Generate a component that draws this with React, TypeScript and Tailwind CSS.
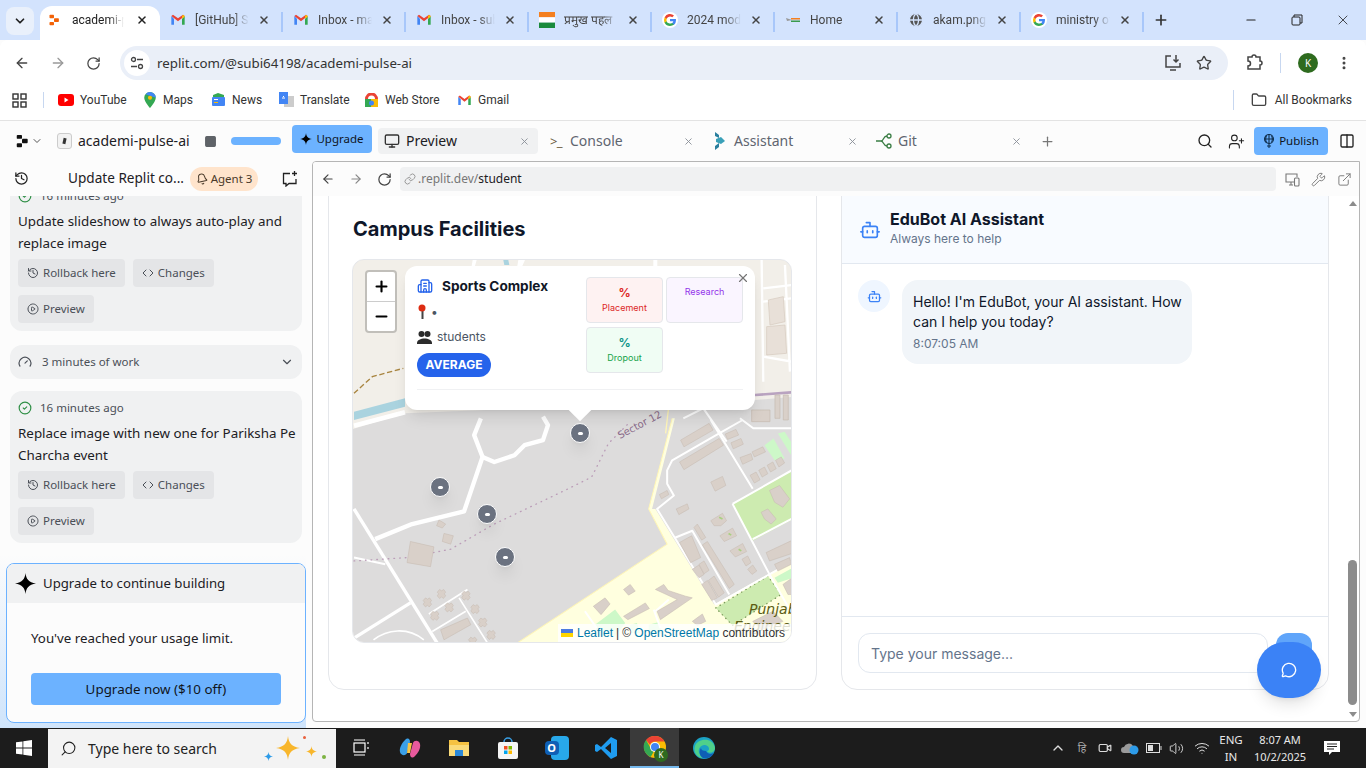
import React from 'react';
import {
  ArrowLeft, ArrowRight, RotateCw, Star, MoreVertical, X, Plus, Minus, ChevronDown, Search, UserPlus,
  Columns2, History, Link, Wrench, ExternalLink, Bot, Building2, Monitor, Gauge,
  CircleCheck, CirclePlay, Code, MessageCircle, Folder, ChevronUp, Wifi, Volume2, Globe, Bell, Square, Video,
} from 'lucide-react';

const GmailIcon = ({ size = 16 }: { size?: number }) => (
  <svg width={size} height={size} viewBox="0 0 24 24" className="shrink-0">
    <path d="M2 6v13h4V10z" fill="#4285f4" />
    <path d="M22 6v13h-4V10z" fill="#34a853" />
    <path d="M2 6l10 8 10-8-2.500-2L12 9.500 4.500 4z" fill="#ea4335" />
    <path d="M18 6.500V10l4-3V6l-2.500-2z" fill="#fbbc04" />
  </svg>
);

const GoogleIcon = () => (
  <svg width="16" height="16" viewBox="0 0 24 24" className="shrink-0">
    <circle cx="12" cy="12" r="12" fill="#fff" />
    <path d="M21 12.300c0-.7 0-1.300-.2-1.900H12v3.600h5a4.300 4.300 0 0 1-1.900 2.800v2.300h3A9 9 0 0 0 21 12.300z" fill="#4285f4" />
    <path d="M12 21c2.400 0 4.500-.8 6-2.200l-3-2.300a5.400 5.400 0 0 1-8-2.800H4v2.400A9 9 0 0 0 12 21z" fill="#34a853" />
    <path d="M7 13.700a5.300 5.300 0 0 1 0-3.400V7.900H4a9 9 0 0 0 0 8.200z" fill="#fbbc04" />
    <path d="M12 6.600c1.300 0 2.500.5 3.400 1.300L18 5.300A9 9 0 0 0 4 7.900l3 2.400a5.400 5.400 0 0 1 5-3.700z" fill="#ea4335" />
  </svg>
);

const ReplitLogo = ({ color = '#f26207', size = 16 }: { color?: string; size?: number }) => (
  <svg width={size} height={size} viewBox="0 0 16 16" className="shrink-0">
    <rect x="2" y="1" width="6" height="4.500" rx="1" fill={color} />
    <rect x="8" y="5.500" width="6.500" height="5" rx="1" fill={color} />
    <rect x="2" y="10.500" width="6" height="4.500" rx="1" fill={color} />
  </svg>
);

const FlagIcon = () => (
  <svg width="16" height="16" viewBox="0 0 16 16" className="shrink-0">
    <rect y="0" width="16" height="5.300" fill="#f47f1f" />
    <rect y="5.300" width="16" height="5.300" fill="#fff" />
    <rect y="10.600" width="16" height="5.400" fill="#1a8a3c" />
  </svg>
);

const HomeFavicon = () => (
  <svg width="16" height="16" viewBox="0 0 16 16" className="shrink-0">
    <path d="M1 6l6 2-5 1z" fill="#999" />
    <rect x="6" y="6" width="9" height="1.500" fill="#f47f1f" />
    <rect x="6" y="8.500" width="9" height="1.500" fill="#3a9a4c" />
  </svg>
);

const ChromeIcon = ({ size = 24 }: { size?: number }) => (
  <svg width={size} height={size} viewBox="0 0 24 24">
    <circle cx="12" cy="12" r="11" fill="#fbbc04" />
    <path d="M12 1a11 11 0 0 1 9.500 5.500H12a5.500 5.500 0 0 0-5 3.300L3 5A11 11 0 0 1 12 1z" fill="#ea4335" />
    <path d="M3 5l4.500 8a5.500 5.500 0 0 0 3 4l-2.800 5A11 11 0 0 1 3 5z" fill="#34a853" />
    <circle cx="12" cy="12" r="5" fill="#fff" />
    <circle cx="12" cy="12" r="4" fill="#4285f4" />
  </svg>
);

const Sparkle = ({ size = 14, color = '#000' }: { size?: number; color?: string }) => (
  <svg width={size} height={size} viewBox="0 0 24 24" className="shrink-0">
    <path d="M12 0c.8 7 3.500 10.700 12 12-8.500 1.300-11.200 5-12 12-.8-7-3.500-10.700-12-12C8.500 10.700 11.200 7 12 0z" fill={color} />
  </svg>
);

const tabs: { title: string; icon: React.ReactNode }[] = [
  { title: '[GitHub] Sub', icon: <GmailIcon /> },
  { title: 'Inbox - mail', icon: <GmailIcon /> },
  { title: 'Inbox - subi', icon: <GmailIcon /> },
  { title: 'प्रमुख पहल', icon: <FlagIcon /> },
  { title: '2024 mode', icon: <GoogleIcon /> },
  { title: 'Home', icon: <HomeFavicon /> },
  { title: 'akam.png', icon: <Globe size={16} className="text-[#555] shrink-0" fill="#555" stroke="#d3e3fd" /> },
  { title: 'ministry of', icon: <GoogleIcon /> },
];

const TabStrip = () => (
  <div className="h-10 bg-[#d3e3fd] flex items-end pl-[6px] text-[12px] text-[#444] font-['Roboto',sans-serif]">
    <div className="w-7 h-7 mb-[5px] mr-[6px] rounded-lg bg-[#e9f0fb] flex items-center justify-center">
      <ChevronDown size={14} strokeWidth={3} className="text-[#222]" />
    </div>
    <div className="w-[120px] h-[34px] pb-[6px] bg-white rounded-t-xl flex items-center pl-[8px] pr-[12px] gap-[12px] text-[#222]">
      <ReplitLogo size={12} />
      <span className="flex-1 overflow-hidden whitespace-nowrap [mask-image:linear-gradient(90deg,#000_70%,transparent)]">academi-pulse</span>
      <X size={12} strokeWidth={3} className="shrink-0" />
    </div>
    {tabs.map((t) => (
      <div key={t.title} className="w-[123px] h-[34px] pb-[6px] flex items-center pl-[10px] pr-[13px] gap-[9px] relative">
        <span className="shrink-0">{t.icon}</span>
        <span className="flex-1 overflow-hidden whitespace-nowrap [mask-image:linear-gradient(90deg,#000_70%,transparent)]">{t.title}</span>
        <X size={12} strokeWidth={3} className="shrink-0 text-[#444]" />
        <span className="absolute right-0 top-[6px] h-5 w-[2px] bg-[#a8c7fa]" />
      </div>
    ))}
    <Plus size={16} strokeWidth={2.5} className="mb-[12px] ml-[9px] text-[#333]" />
    <div className="flex-1" />
    <div className="flex items-center h-10 text-[#222]">
      <div className="w-[46px] flex justify-center"><Minus size={14} /></div>
      <div className="w-[46px] flex justify-center">
        <svg width="12" height="12" viewBox="0 0 12 12" fill="none" stroke="#222"><rect x="1" y="3" width="8" height="8" rx="1" /><path d="M3 3V1h8v8H9" /></svg>
      </div>
      <div className="w-[46px] flex justify-center"><X size={16} strokeWidth={1.2} /></div>
    </div>
  </div>
);

const AddressBar = () => (
  <div className="h-[46px] bg-white rounded-t-lg flex items-center text-[#444]">
    <div className="w-[120px] shrink-0 flex items-center pl-[14px] gap-[20px]">
      <ArrowLeft size={16} strokeWidth={2} />
      <ArrowRight size={16} strokeWidth={2} className="text-[#999]" />
      <RotateCw size={15} strokeWidth={2} />
    </div>
    <div className="w-[1108px] h-[34px] rounded-full bg-[#eaeff8] flex items-center pl-[4px] pr-[16px]">
      <div className="w-[26px] h-[26px] rounded-full bg-white flex items-center justify-center mr-[7px]">
        <svg width="14" height="14" viewBox="0 0 14 14" fill="none" stroke="#444" strokeWidth="1.300">
          <circle cx="3.500" cy="3.500" r="2" /><path d="M7 3.500h6M1 10.500h6" /><circle cx="10.500" cy="10.500" r="2" />
        </svg>
      </div>
      <span className="text-[13.3px] text-[#333] pt-px">replit.com/@subi64198/academi-pulse-ai</span>
      <div className="flex-1" />
      <svg width="18" height="18" viewBox="0 0 18 18" fill="none" stroke="#444" strokeWidth="1.500" className="mr-[14px]">
        <path d="M7 2H2v11h14V9" /><path d="M12 1v7M9.500 5.500L12 8l2.500-2.500" /><path d="M6 16h6" />
      </svg>
      <Star size={16} strokeWidth={2} />
    </div>
    <div className="flex-1 flex items-center pl-[17px] text-[#444]">
      <svg width="18" height="18" viewBox="0 0 18 18" fill="none" stroke="#444" strokeWidth="1.500">
        <path d="M3 3h4a2 2 0 0 1 4 0h4v4a2 2 0 0 1 0 4v4H3v-3a2 2 0 0 0 0-5z" />
      </svg>
      <span className="w-px h-5 bg-[#c7d7f0] ml-[17px]" />
      <span className="w-5 h-5 rounded-full bg-[#2e6b1f] text-white text-[10px] flex items-center justify-center ml-[17px]">K</span>
      <MoreVertical size={16} strokeWidth={2.5} className="ml-[18px]" />
    </div>
  </div>
);

const Bookmark = ({ icon, label, width }: { icon: React.ReactNode; label: string; width: string }) => (
  <div className={`flex items-center gap-[6px] ${width}`}>
    {icon}
    <span className="whitespace-nowrap">{label}</span>
  </div>
);

const BookmarksBar = () => (
  <div className="h-[35px] pb-[6px] bg-white flex items-center text-[12px] text-[#333] pl-[12px] border-b border-[#e3e3e3] font-['Roboto',sans-serif]">
    <svg width="15" height="15" viewBox="0 0 15 15" fill="none" stroke="#333" strokeWidth="1.400" className="mr-[16px]">
      <rect x="1" y="1" width="5" height="5" /><rect x="9" y="1" width="5" height="5" /><rect x="1" y="9" width="5" height="5" /><rect x="9" y="9" width="5" height="5" />
    </svg>
    <span className="w-px h-4 bg-[#c7d7f0] mr-[14px]" />
    <Bookmark width="w-[85px]" label="YouTube" icon={<svg width="16" height="12" viewBox="0 0 16 12"><rect width="16" height="12" rx="3" fill="#f00" /><path d="M6.500 3.500v5l4-2.500z" fill="#fff" /></svg>} />
    <Bookmark width="w-[68px]" label="Maps" icon={<svg width="14" height="16" viewBox="0 0 14 18"><path d="M7 0a6.500 6.500 0 0 0-6.500 6.500C.5 11 7 18 7 18s6.500-7 6.500-11.500A6.500 6.500 0 0 0 7 0z" fill="#34a853" /><path d="M7 0a6.500 6.500 0 0 1 6.500 6.500L2 2.500A6.500 6.500 0 0 1 7 0z" fill="#4285f4" /><circle cx="7" cy="6.500" r="2.300" fill="#fbbc04" /></svg>} />
    <Bookmark width="w-[67px]" label="News" icon={<svg width="15" height="14" viewBox="0 0 15 14"><path d="M2 2l5-2 6 2v2H2z" fill="#34a853" /><rect x="1" y="4" width="13" height="9" rx="1" fill="#4285f4" /><rect x="3" y="6" width="4" height="1" fill="#fff" /><rect x="3" y="9" width="4" height="1" fill="#fbbc04" /></svg>} />
    <Bookmark width="w-[86px]" label="Translate" icon={<svg width="16" height="16" viewBox="0 0 16 16"><rect x="6" y="4" width="10" height="11" fill="#ccc" /><path d="M1 0h9v12H1z" fill="#4285f4" /><path d="M4 6h3M5.500 4v1" stroke="#fff" /></svg>} />
    <Bookmark width="w-[93px]" label="Web Store" icon={<svg width="15" height="15" viewBox="0 0 15 15"><path d="M1 6a6.500 6.500 0 0 1 13 0H11a3.500 3.500 0 0 0-7 0z" fill="#ea4335" /><rect x="1" y="6" width="6" height="8" fill="#34a853" /><rect x="7" y="6" width="7" height="8" fill="#fbbc04" /><circle cx="7.500" cy="10" r="2.500" fill="#4285f4" /></svg>} />
    <Bookmark width="w-[70px]" label="Gmail" icon={<GmailIcon size={15} />} />
    <div className="flex-1" />
    <span className="w-px h-5 bg-[#c7d7f0] mr-[17px]" />
    <Folder size={16} className="mr-[8px] text-[#444]" />
    <span className="pr-[14px]">All Bookmarks</span>
  </div>
);

const ReplitTab = ({ icon, label, active }: { icon: React.ReactNode; label: string; active?: boolean }) => (
  <div className={`w-[160px] h-[26px] mr-[4px] rounded flex items-center pl-[6px] pr-[8px] gap-[6px] text-[14px] ${active ? 'bg-[#f0f1f2] text-[#1c2024]' : 'text-[#5f6570]'}`}>
    <span className="w-[16px] flex justify-center">{icon}</span>
    <span className="flex-1 pb-[2px]">{label}</span>
    <X size={11} className="text-[#8a8f98]" />
  </div>
);

const ReplitBar = () => (
  <div className="h-10 bg-[#fcfcfc] flex items-center pl-[15px] font-['Noto_Sans',sans-serif]">
    <ReplitLogo color="#111" size={14} />
    <ChevronDown size={12} className="ml-[2px] text-[#555]" />
    <div className="w-[15px] h-[16px] ml-[14px] rounded-[3px] border border-[#ccc] bg-[#f2f2f2] flex items-center justify-center">
      <span className="w-[3px] h-[6px] bg-[#333] rotate-12" />
    </div>
    <span className="ml-[6px] pb-[2px] w-[111px] text-[14px] text-[#1c2024] whitespace-nowrap">academi-pulse-ai</span>
    <Square size={13} fill="#5f6368" stroke="#5f6368" className="ml-[15px]" />
    <span className="ml-[14px] w-[50px] h-[8px] rounded-full bg-[#6cb2ff]" />
    <div className="ml-[11px] -mt-[4px] w-[80px] h-[28px] rounded bg-[#6cb2ff] flex items-center justify-center gap-[4px] text-[11.5px] text-[#10151c]">
      <Sparkle size={12} />
      Upgrade
    </div>
    <div className="ml-[6px] flex items-center">
      <ReplitTab active label="Preview" icon={<Monitor size={16} className="text-[#333]" />} />
      <ReplitTab label="Console" icon={<span className="text-[13px] text-[#6b5a3e] tracking-tighter leading-none">&gt;_</span>} />
      <ReplitTab label="Assistant" icon={<svg width="12" height="18" viewBox="0 0 12 18"><path d="M1 0l4 3v3L1 4zM1 14l4-3v4l-4 3z" fill="#2a7f9e" /><path d="M2 7l5-2 4 4-4 3-5-2z" fill="#3aa0b8" /></svg>} />
      <ReplitTab label="Git" icon={<svg width="16" height="16" viewBox="0 0 16 16" fill="none" stroke="#3a7d44" strokeWidth="1.300"><path d="M0 8h5M5 8c3 0 2-5 6-5M5 8c3 0 2 5 6 5" /><circle cx="13" cy="3" r="2" /><circle cx="13" cy="13" r="2" /></svg>} />
    </div>
    <Plus size={15} className="ml-[6px] text-[#777]" />
    <div className="flex-1" />
    <Search size={16} className="text-[#222]" />
    <UserPlus size={17} strokeWidth={1.5} className="ml-[15px] text-[#222]" />
    <div className="ml-[9px] w-[74px] h-[28px] rounded bg-[#6cb2ff] flex items-center justify-center gap-[4px] text-[11.5px] text-[#10151c]">
      <svg width="12" height="14" viewBox="0 0 12 14" fill="none" stroke="#10304f" strokeWidth="1.100">
        <circle cx="6" cy="5" r="4.500" /><path d="M6 .5v9M1.500 5h9M3.500 1.500c-1 2-1 5 0 7M8.500 1.500c1 2 1 5 0 7M6 9.500V14M4 12h4" />
      </svg>
      Publish
    </div>
    <Columns2 size={16} className="ml-[11px] mr-[11px] text-[#222]" />
  </div>
);

const CheckpointCard = ({ title, clipped }: { title: string; clipped?: boolean }) => (
  <div className={`w-[292px] h-[152px] shrink-0 rounded-xl bg-[#f0f1f2] pl-2 pr-1 pt-[7px] text-[#1c2024] ${clipped ? '-mt-[17px]' : ''}`}>
    <div className="h-5 flex items-center gap-2 text-[11.5px] text-[#4a4f57]">
      <CircleCheck size={14} className="text-[#2f8f46]" />
      16 minutes ago
    </div>
    <p className="mt-[4px] text-[13.4px] leading-[22px]">{title}</p>
    <div className="mt-[5px] flex gap-2 text-[11.5px] text-[#4a4f57]">
      <div className="h-7 px-[9px] rounded bg-[#e4e5e7] flex items-center gap-[4px]"><History size={12} />Rollback here</div>
      <div className="h-7 px-[9px] rounded bg-[#e4e5e7] flex items-center gap-[4px]"><Code size={12} />Changes</div>
    </div>
    <div className="mt-2 flex text-[11.5px] text-[#4a4f57]">
      <div className="h-7 px-[9px] rounded bg-[#e4e5e7] flex items-center gap-[4px]"><CirclePlay size={12} strokeDasharray="3 1.500" />Preview</div>
    </div>
  </div>
);

const AgentPanel = () => (
  <div className="w-[312px] shrink-0 flex flex-col relative bg-[#fcfcfc] font-['Noto_Sans',sans-serif]">
    <div className="h-[35px] shrink-0 flex items-center pl-[14px] bg-[#fcfcfc] relative z-10">
      <History size={15} className="text-[#222]" />
      <span className="ml-[39px] w-[122px] text-[13.6px] text-[#1c2024] whitespace-nowrap">Update Replit co...</span>
      <div className="h-[24px] w-[68px] rounded-full bg-[#ffe4cc] flex items-center justify-center gap-[3px] text-[11.5px] text-[#4a3a2a]">
        <Bell size={12} className="-rotate-12" />
        Agent 3
      </div>
      <svg width="16" height="16" viewBox="0 0 16 16" fill="none" stroke="#222" strokeWidth="1.300" className="ml-[24px]">
        <path d="M8 2.500H1.500v10H4v2.500l3-2.500h7V8" /><path d="M12.500 0v5M10 2.500h5" />
      </svg>
    </div>
    <div className="flex-1 overflow-hidden pl-[10px] flex flex-col">
      <CheckpointCard clipped title="Update slideshow to always auto-play and replace image" />
      <div className="mt-[14px] w-[292px] h-[34px] shrink-0 rounded-xl bg-[#f0f1f2] flex items-center px-[8px] text-[11.5px] text-[#4a4f57]">
        <Gauge size={14} />
        <span className="ml-[10px] flex-1">3 minutes of work</span>
        <ChevronDown size={14} />
      </div>
      <div className="mt-3"><CheckpointCard title="Replace image with new one for Pariksha Pe Charcha event" /></div>
    </div>
    {/* upgrade box sits over the scrolling list */}
    <div className="absolute left-0 right-[6px] bottom-0 h-[173px] bg-gradient-to-b from-transparent to-[#cfe4fb]" />
    <div className="absolute left-[6px] bottom-[5px] w-[300px] h-[160px] rounded-lg border border-[#6cb2ff] bg-[#fcfcfc] overflow-hidden">
      <div className="h-[39px] bg-[#f0f1f2] flex items-center pl-[8px] gap-[7px] text-[13.2px] text-[#1c2024]">
        <Sparkle size={21} />
        Upgrade to continue building
      </div>
      <p className="mt-[26px] ml-[24px] text-[13.3px] text-[#1c2024]">You've reached your usage limit.</p>
      <div className="mt-[24px] mx-[24px] h-[32px] rounded bg-[#6cb2ff] flex items-center justify-center text-[13.4px] text-[#10151c]">
        Upgrade now ($10 off)
      </div>
    </div>
  </div>
);

// footprints, in the pixel grid of the lower map crop
const lowerBuildings = [
  '985,60 1070,10 1082,30 995,80', '982,125 1100,55 1113,75 995,148', '1118,42 1150,28 1158,45 1125,58',
  '1135,68 1165,55 1172,72 1142,86', '1162,112 1195,100 1200,118 1170,132', '1198,95 1230,80 1238,95 1205,110',
  '1192,165 1210,155 1222,178 1205,188', '1218,150 1235,140 1245,160 1228,170', '1243,135 1260,125 1270,145 1253,155',
  '1268,120 1285,110 1295,128 1278,140', '1075,185 1110,168 1120,195 1088,212', '922,222 945,210 950,222 928,235',
  '972,265 1005,250 1010,265 980,282', '1075,300 1110,278 1122,300 1105,315 1085,315', '1102,345 1140,322 1152,345 1115,362',
  '1132,390 1170,368 1182,392 1148,408', '1168,415 1185,405 1195,425 1180,435', '1185,445 1200,432 1212,450 1198,460',
  '1025,320 1035,310 1060,350 1048,358', '1050,372 1065,362 1145,490 1130,502', '1048,490 1065,478 1095,530 1078,538',
  '1068,478 1085,465 1115,515 1098,528', '1020,445 1040,432 1055,460 1040,470', '1040,430 1055,420 1070,448 1055,458',
  '982,365 1018,345 1045,410 1015,425', '1250,210 1280,195 1310,235 1290,260 1265,245', '1225,275 1245,265 1270,295 1255,310 1235,295',
  '725,555 760,530 775,548 748,580', '815,505 835,490 850,510 830,522', '815,585 880,545 892,562 828,595',
  '910,505 935,490 948,508 1000,525 1020,530 925,595 915,570 975,535', '1020,600 1050,578 1060,600 1035,612',
  '1240,395 1325,355 1325,395 1250,420', '1265,430 1310,410 1315,430 1275,450', '1290,490 1325,465 1325,520 1305,520',
  '170,425 240,437 250,378 180,362', '275,362 300,370 308,345 280,338', '258,315 275,322 285,310 265,298',
  '270,625 350,590 360,610 280,655', '1200,600 1260,570 1290,600 1225,625',
];

const clovers: [number, number][] = [[230, 543], [272, 518], [345, 523], [372, 563], [295, 558], [252, 583], [395, 603], [420, 640], [365, 660]];

const MapDrawing = () => (
  <svg width="438" height="382" viewBox="0 0 438 382" className="block">
    <rect width="438" height="382" fill="#dddcdc" />
    {/* upper crop grid */}
    <g transform="translate(-3 -5) scale(0.3333)" fill="none">
      <path d="M0 0h1340v425l-125 10-250 30-300-10-500 20-165 50z" fill="#f2efe9" />
      <path d="M12 470l153-40v25L12 495z" fill="#aad3df" />
      <path d="M12 512l153-40" stroke="#fff" strokeWidth="14" />
      <path d="M12 415l55-50 93-25" stroke="#a8843f" strokeWidth="4" strokeDasharray="16 8" />
      <path d="M1215 420l110-8" stroke="#b9a3c0" strokeWidth="8" />
      <path d="M1235 15l5 365M1240 100l85-10M1240 305l85 15M1305 30l15 320M1325 130l-85 10" stroke="#fff" strokeWidth="7" />
      <path d="M1255 135l45-10 5 75-45 10zM1250 215l55-5 5 85-60 5z" fill="#e8e0d8" stroke="#d4c9bd" strokeWidth="2" />
      <path d="M460 15l15 0 3 15h-15z" fill="#aad3df" />
      <path d="M368 15h12l-5 18h-10zM505 15h20l-8 18h-15zM910 15h12v20h-12z" fill="#fff" />
      <path d="M1205 465h55v35h-55zM1275 420h15v70h-15zM1300 420h15v75h-15z" fill="#d9d0c9" stroke="#c5b9af" strokeWidth="2" />
      <path d="M1000 490l60-30 70 100M1170 490l40 30h115" stroke="#fff" strokeWidth="6" />
      <path d="M955 465l-8 70" stroke="#fff6b8" strokeWidth="4" />
    </g>
    {/* lower crop grid */}
    <g transform="translate(-3 160) scale(0.3356)" fill="none">
      <path d="M490 670l455-300-55-105 70-270 8 0-68 270 10 0 175 285 240-135v505z" fill="#ffffdf" />
      <path d="M490 670l455-300-55-105 70-270" stroke="#fff6b8" strokeWidth="3" />
      <path d="M1140 250l190-105v145l-130 70z" fill="#cdebb0" />
      <path d="M1090 560l155-95 40 55-145 92z" fill="#cdebb0" />
      <path d="M1090 560l155-95 40 55-145 92z" stroke="#7a9a5a" strokeWidth="4" strokeDasharray="1 14" strokeLinecap="round" />
      <path d="M1235 75l27-20 33 60-30 5zM1275 40l20-5 35 55v40z" fill="#cdf8c8" />
      <path d="M730 610l60-45 30 40-30 40h-50zM835 610l20-5 10 30h-30zM890 610l30-8 10 35h-40zM1265 470l55-30v30l-45 15z" fill="#cdf8c8" />
      <g stroke="#fff" strokeLinejoin="round">
        <path d="M75 355l110-45 155-38 55-162 35 15 60-20 30-30 55-15 15-45-15-25" strokeWidth="13" />
        <path d="M395 110l-25-65 20-50" strokeWidth="13" />
        <path d="M12 265l248 400" strokeWidth="10" />
        <path d="M12 410l93 20" strokeWidth="6" />
        <path d="M180 545L12 650" strokeWidth="10" />
        <path d="M1075 0l125 205M1170 0l-70 40-140 80-15 30v40l20 35-50 40 175 285 160-90 80-45M1140 250l185-105M1140 250l110 210 75 130M1200 355l125-65M970 350l50-20 110 190M700 570l35 50M910 570l40-35M905 565l20 55" strokeWidth="6" />
        <path d="M235 578l115-73M245 630l100-60M325 530l85 135M70 655c40-30 100-40 150 0" strokeWidth="5" />
      </g>
      <path d="M12 420l158-10 130-25 130-75 210-100 80-40 50-100 60-60" stroke="#bb9db8" strokeWidth="4" strokeDasharray="2 15" strokeLinecap="round" />
      <g fill="#d9d0c9" stroke="#c5b9af" strokeWidth="1.500">
        {lowerBuildings.map((p) => <polygon key={p} points={p} />)}
        {clovers.map(([x, y]) => (
          <path key={`${x}-${y}`} d={`M${x - 12} ${y - 5}l7 -8 6 4 6 -4 6 8 -4 5 4 6 -7 8 -5 -5 -6 5 -7 -8 4 -6z`} />
        ))}
      </g>
      <path d="M1100 290l10 5M1128 338l8 5M1158 385l8 5" stroke="#a8d080" strokeWidth="5" />
    </g>
    <text x="267" y="179" transform="rotate(-28 267 179)" fontSize="10" fill="#8a6b8a" fontFamily="DejaVu Sans">Sector 12</text>
    <text x="396" y="354" fontSize="14" fontStyle="italic" fill="#5c5c14" fontFamily="DejaVu Sans">Punjab</text>
    <text x="381" y="371" fontSize="14" fontStyle="italic" fill="#5c5c14" fontFamily="DejaVu Sans">Engineering</text>
  </svg>
);

const markers = [
  'left-[217px] top-[163px]',
  'left-[77px] top-[217px]',
  'left-[124px] top-[244px]',
  'left-[142px] top-[287px]',
];

const Popup = () => (
  <div className="absolute left-[52px] top-[6px] w-[350px] h-[144px] bg-white rounded-xl shadow-lg px-3 pt-[10px] font-['Inter',sans-serif]">
    <div className="flex gap-[19px]">
      <div className="w-[150px] shrink-0">
        <div className="flex items-center gap-[9px] h-5 text-[13.6px] font-bold text-[#111827] whitespace-nowrap">
          <Building2 size={16} className="text-[#2563eb]" />
          Sports Complex
        </div>
        <div className="mt-[6px] h-5 flex items-center gap-[3px] text-[#4b5563] text-[12px]">
          <svg width="11" height="16" viewBox="0 0 11 16"><rect x="4.500" y="6" width="2" height="9" fill="#444" /><circle cx="5" cy="4" r="3.500" fill="#dd2c12" /></svg>
          •
        </div>
        <div className="mt-[5px] h-5 flex items-center gap-[5px] text-[#4b5563] text-[12px]">
          <svg width="15" height="14" viewBox="0 0 15 14" fill="#2b2b2b"><circle cx="4.500" cy="4" r="3" /><circle cx="10.500" cy="4" r="3" /><path d="M0 13c0-6 15-6 15 0v1H0z" /></svg>
          students
        </div>
        <div className="mt-[6px] w-[74px] h-6 rounded-full bg-[#2563eb] text-white text-[12px] font-bold flex items-center justify-center">AVERAGE</div>
      </div>
      <div className="grid grid-cols-[77px_77px] gap-x-[3px] gap-y-[4px] w-[157px] text-center text-[9px] auto-rows-[46px] mt-px">
        <div className="rounded border border-[#e5e7eb] bg-[#fef2f2] pt-[7px] text-[#dc2626]"><div className="text-[12px] font-bold leading-4">%</div><div>Placement</div></div>
        <div className="rounded border border-[#e5e7eb] bg-[#faf5ff] pt-[7px] text-[#9333ea]"><div>Research</div></div>
        <div className="rounded border border-[#e5e7eb] bg-[#f0fdf4] pt-[7px] text-[#16a34a]"><div className="text-[12px] font-bold leading-4 text-[#0d9488]">%</div><div>Dropout</div></div>
      </div>
    </div>
    <div className="mt-[12px] h-px bg-[#f0f1f3]" />
    <X size={14} className="absolute right-[5px] top-[5px] text-[#757575]" />
    {/* tip */}
    <div className="absolute left-[167px] -bottom-[8px] w-4 h-4 bg-white rotate-45" />
  </div>
);

const CampusCard = () => (
  <div className="w-[489px] h-[526px] shrink-0 -mt-[32px] rounded-2xl border border-[#e5e7eb] bg-white px-6 pt-[50px]">
    <h2 className="text-[20px] font-bold leading-7 text-[#0f172a]">Campus Facilities</h2>
    <div className="mt-[16px] w-[438px] h-[382px] rounded-xl overflow-hidden relative border border-[#e5e7eb] box-content -ml-px">
      <MapDrawing />
      <div className="absolute left-[12px] top-[10px] w-[32px] rounded border-2 border-[#00000033] bg-clip-padding bg-white text-black">
        <div className="h-[30px] flex items-center justify-center border-b border-[#ccc]"><Plus size={17} strokeWidth={3} /></div>
        <div className="h-[29px] flex items-center justify-center"><Minus size={17} strokeWidth={3} /></div>
      </div>
      {markers.map((m) => (
        <div key={m} className={`absolute ${m} w-5 h-5 rounded-full bg-[#6b7280] border border-white shadow-lg flex items-center justify-center`}>
          <span className="w-[5px] h-[3px] rounded-full bg-white" />
        </div>
      ))}
      <Popup />
      <div className="absolute right-0 bottom-0 h-[18px] w-[233px] bg-white/80 flex items-center pl-[3px] text-[12px] text-[#333] font-['Liberation_Sans',sans-serif] whitespace-nowrap">
        <svg width="12" height="8" viewBox="0 0 12 8" className="mr-[4px]"><rect width="12" height="4" fill="#4c7be1" /><rect y="4" width="12" height="4" fill="#ffd500" /></svg>
        <span className="text-[#0078a8]">Leaflet</span>
        <span className="mx-[3px]">|</span>
        <span>©&nbsp;</span>
        <span className="text-[#0078a8]">OpenStreetMap</span>
        <span>&nbsp;contributors</span>
      </div>
    </div>
  </div>
);

const ChatCard = () => (
  <div className="w-[488px] h-[495px] shrink-0 -mt-[1px] rounded-b-2xl border border-[#e5e7eb] bg-white flex flex-col">
    <div className="h-[68px] shrink-0 bg-[#f8fbff] border-b border-[#e2e8f0] flex items-center pl-[17px] gap-[9px]">
      <Bot size={22} strokeWidth={1.8} className="text-[#3b82f6]" />
      <div className="-mt-[5px]">
        <div className="text-[16px] font-bold leading-6 text-[#0f172a]">EduBot AI Assistant</div>
        <div className="text-[12px] leading-4 text-[#64748b]">Always here to help</div>
      </div>
    </div>
    <div className="flex-1 flex gap-3 pl-4 pt-4">
      <div className="w-8 h-8 rounded-full bg-[#eff6ff] flex items-center justify-center">
        <Bot size={15} className="text-[#3b82f6]" />
      </div>
      <div className="w-[290px] h-[84px] rounded-2xl bg-[#f1f5f9] pl-[11px] pr-[6px] pt-3 text-[#0f172a]">
        <p className="text-[14px] leading-5">Hello! I'm EduBot, your AI assistant. How can I help you today?</p>
        <p className="mt-[4px] text-[12px] leading-4 text-[#64748b]">8:07:05 AM</p>
      </div>
    </div>
    <div className="h-[73px] shrink-0 border-t border-[#e2e8f0] flex pl-4 pt-4 gap-2">
      <div className="w-[410px] h-10 rounded-xl border border-[#e2e8f0] flex items-center pl-3 text-[14px] text-[#64748b]">Type your message...</div>
      <div className="w-9 h-10 rounded-xl bg-[#60a5fa]" />
    </div>
  </div>
);

const PreviewPanel = () => (
  <div className="flex-1 flex flex-col mr-[6px] mb-[6px] border border-[#b5b5b5] rounded-tl rounded-b bg-white overflow-hidden relative">
    <div className="h-[34px] shrink-0 bg-[#fcfcfc] flex items-center pl-[8px] text-[#444] font-['Noto_Sans',sans-serif]">
      <ArrowLeft size={14} />
      <ArrowRight size={14} className="ml-[14px] text-[#888]" />
      <RotateCw size={15} className="ml-[14px]" />
      <div className="ml-[8px] w-[876px] h-[24px] rounded bg-[#f0f1f2] flex items-center pl-[4px] text-[12px] text-[#777]">
        <Link size={12} className="mr-[2px] text-[#999]" />
        .replit.dev/<span className="text-[#1c2024]">student</span>
      </div>
      <div className="flex items-center gap-[11px] ml-[9px] text-[#777]">
        <svg width="15" height="15" viewBox="0 0 15 15" fill="none" stroke="#777" strokeWidth="1.100">
          <path d="M9 10H1V2h11v3M4 13h4M6 10v3" /><rect x="9.500" y="6" width="4.500" height="8" rx="1" />
        </svg>
        <Wrench size={15} strokeWidth={1.5} />
        <ExternalLink size={15} strokeWidth={1.5} />
      </div>
    </div>
    <div className="flex-1 flex overflow-hidden pl-[15px] gap-6 font-['Inter',sans-serif]">
      <CampusCard />
      <ChatCard />
      <div className="-ml-[7px] w-[13px] shrink-0 flex flex-col items-center pb-[4px] pt-[5px]">
        <span className="w-0 h-0 border-x-[4px] border-x-transparent border-b-[5px] border-b-[#8c8c8c]" />
        <span className="mt-auto mb-[7px] w-[9px] h-[145px] rounded-full bg-[#8c8c8c]" />
        <span className="w-0 h-0 border-x-[4px] border-x-transparent border-t-[5px] border-t-[#8c8c8c]" />
      </div>
    </div>
    <div className="absolute left-[944px] top-[480px] w-16 h-14 rounded-full bg-[#3b82f6] shadow-lg flex items-center justify-center text-white">
      <MessageCircle size={16} />
    </div>
  </div>
);

const TaskIcon = ({ children, active }: { children: React.ReactNode; active?: boolean }) => (
  <div className={`w-[49px] h-10 flex items-center justify-center relative ${active ? 'bg-[#3a3a3a] border-b-[2px] border-[#76b9ed]' : ''}`}>{children}</div>
);

const Taskbar = () => (
  <div className="h-10 bg-[#1c1c1c] flex items-center text-white font-['Noto_Sans',sans-serif]">
    <div className="w-12 h-10 flex items-center justify-center">
      <svg width="16" height="16" viewBox="0 0 16 16" fill="#fff"><path d="M0 2.300l6.500-.9v6.200H0zM7.300 1.300L16 0v7.600H7.300zM0 8.400h6.500v6.200L0 13.700zM7.300 8.400H16V16l-8.700-1.300z" /></svg>
    </div>
    <div className="w-[288px] h-[39px] mt-px bg-[#f3f3f3] flex items-center pl-[12px] text-[#222] text-[14px] relative">
      <Search size={17} strokeWidth={1.5} className="-scale-x-100" />
      <span className="ml-[11px]">Type here to search</span>
      <span className="absolute left-[228px] top-[7px]"><Sparkle size={24} color="#f8b62b" /></span>
      <span className="absolute left-[258px] top-[17px]"><Sparkle size={11} color="#f8b62b" /></span>
      <span className="absolute left-[216px] top-[23px]"><Sparkle size={9} color="#2d9be8" /></span>
      <span className="absolute left-[255px] top-[7px] w-[3px] h-[3px] rounded-full bg-[#e8603c]" />
      <span className="absolute left-[274px] top-[26px] w-[4px] h-[4px] rounded-full bg-[#7cb342]" />
    </div>
    <TaskIcon><svg width="18" height="18" viewBox="0 0 18 18" fill="none" stroke="#fff" strokeWidth="1.200"><rect x="2" y="4" width="11" height="9" /><path d="M2 1h11M2 16h11M16 3v2M16 8v2" /></svg></TaskIcon>
    <TaskIcon>
      <svg width="22" height="22" viewBox="0 0 22 22"><path d="M6 3c3-3 5-1 5 2l-3 11c-1 3-6 3-7-1-1-4 2-9 5-12z" fill="#3aa0e8" /><path d="M16 19c-3 3-5 1-5-2l3-11c1-3 6-3 7 1 1 4-2 9-5 12z" fill="#e85a9c" /><path d="M9 6h4l-2 10H8z" fill="#f6c445" /></svg>
    </TaskIcon>
    <TaskIcon>
      <svg width="22" height="20" viewBox="0 0 22 20"><path d="M1 2h8l2 2h10v14H1z" fill="#f5c242" /><rect x="1" y="7" width="20" height="11" fill="#fadb7a" /><rect x="7" y="12" width="8" height="6" fill="#2b88d8" /></svg>
    </TaskIcon>
    <TaskIcon>
      <svg width="22" height="24" viewBox="0 0 22 24"><path d="M7 6a4 4 0 0 1 8 0" fill="none" stroke="#39a0e6" strokeWidth="1.500" /><rect x="1" y="6" width="20" height="17" rx="2" fill="#f5f5f5" /><rect x="7" y="10" width="3.500" height="3.500" fill="#f25022" /><rect x="11.500" y="10" width="3.500" height="3.500" fill="#7fba00" /><rect x="7" y="14.500" width="3.500" height="3.500" fill="#00a4ef" /><rect x="11.500" y="14.500" width="3.500" height="3.500" fill="#ffb900" /></svg>
    </TaskIcon>
    <TaskIcon>
      <div className="relative w-[24px] h-[24px]">
        <div className="absolute left-[6px] top-0 w-[18px] h-[24px] rounded-sm bg-[#28a8ea]" />
        <div className="absolute left-0 top-[5px] w-[14px] h-[14px] rounded-sm bg-[#0f5fb5] text-white text-[11px] font-bold leading-[14px] text-center">O</div>
      </div>
    </TaskIcon>
    <TaskIcon>
      <svg width="24" height="24" viewBox="0 0 24 24"><path d="M17 1l6 3v16l-6 3-10-10-4 3-2-1V9l2-1 4 3zM17 7l-6 5 6 5z" fill="#1f9cf0" /></svg>
    </TaskIcon>
    <TaskIcon active>
      <ChromeIcon />
      <span className="absolute left-[24px] top-[20px] w-[14px] h-[14px] rounded-full bg-[#2e6b1f] text-[8px] flex items-center justify-center">K</span>
    </TaskIcon>
    <TaskIcon>
      <svg width="24" height="24" viewBox="0 0 24 24"><circle cx="12" cy="12" r="11" fill="#1ba1c4" /><path d="M3 10c3-8 18-9 20 2 0 5-7 6-8 3 3 0 3-5-2-6-5 0-10 6-2 13-6 0-10-6-8-12z" fill="#4fd08a" /><path d="M14 15c2 4 6 3 8 2-3 5-8 6-11 5-4-2-4-8-2-10 0 2 2 3 5 3z" fill="#0f5fb5" /></svg>
    </TaskIcon>
    <div className="flex-1" />
    <div className="flex items-center text-[#ddd]">
      <ChevronUp size={16} className="mr-[6px]" />
      <span className="text-[11px] w-[20px] text-center text-[#aaa]">हि</span>
      <Video size={14} className="ml-[6px]" />
      <svg width="18" height="14" viewBox="0 0 18 14" className="ml-[9px]"><path d="M3 12a3 3 0 0 1 0-6 5 5 0 0 1 9-1 4 4 0 0 1 3 7z" fill="#9a9a9a" /><circle cx="13" cy="9" r="4.500" fill="#2d9be8" /></svg>
      <svg width="16" height="10" viewBox="0 0 16 10" fill="none" stroke="#ddd" className="ml-[7px]"><rect x="0.500" y="0.500" width="13" height="9" /><rect x="2" y="2" width="5" height="6" fill="#ddd" stroke="none" /><path d="M15 3v4" /></svg>
      <Volume2 size={15} strokeWidth={1.5} className="ml-[7px]" />
      <Wifi size={16} strokeWidth={1.5} className="ml-[10px]" />
    </div>
    <div className="ml-[8px] w-[26px] text-center text-[11.500px] leading-[17px] text-[#e8e8e8]">ENG<br />IN</div>
    <div className="w-[72px] text-center text-[11px] leading-[17px] text-[#e8e8e8]">8:07 AM<br />10/2/2025</div>
    <div className="w-[28px] ml-[2px] mr-[20px] flex justify-center"><svg width="16" height="16" viewBox="0 0 16 16"><path d="M0 1h16v11H8l-3 3v-3H0z" fill="#fff" /><path d="M3 4h10M3 6.500h10M3 9h7" stroke="#222" /></svg></div>
  </div>
);

export default function App() {
  return (
    <div className="w-[1366px] h-[768px] overflow-hidden flex flex-col font-['Noto_Sans',sans-serif] bg-[#fcfcfc]">
      <TabStrip />
      <AddressBar />
      <BookmarksBar />
      <ReplitBar />
      <div className="flex-1 flex min-h-0">
        <AgentPanel />
        <PreviewPanel />
      </div>
      <Taskbar />
    </div>
  );
}
